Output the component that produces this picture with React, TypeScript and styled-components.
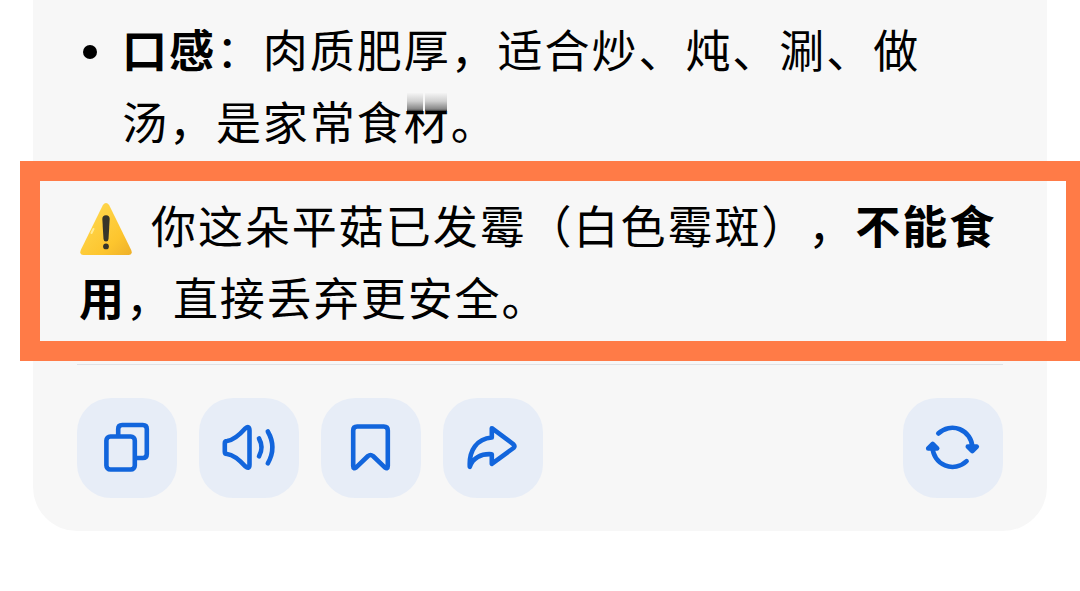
import styled, { createGlobalStyle } from "styled-components";

//styled-components
const GlobalStyle = createGlobalStyle`
    body {
        margin: 0;
        background: #ffffff;
        overflow: hidden;
    }
`;

const Page = styled.main`
    position: relative;
    height: 591px;
    overflow: hidden;
    font-family: "Noto Sans CJK SC", "Noto Sans", sans-serif;
    font-size: 45px;
    line-height: 72px;
    letter-spacing: 1.95px;
    text-spacing-trim: space-all;
    color: #000000;
`;

const Card = styled.article`
    box-sizing: border-box;
    width: 1014px;
    height: 531px;
    margin-left: 33px;
    padding: 13px 44px 0;
    border-radius: 0 0 44px 44px;
    background: #f7f7f7;
`;

const List = styled.ul`
    margin: 0;
    padding: 0;
    list-style: none;
`;

const ListItem = styled.li`
    display: flex;
    white-space: nowrap;
`;

const Bullet = styled.span`
    flex: none;
    width: 14px;
    height: 14px;
    margin: 32px 25px 0 6px;
    border-radius: 50%;
    background: #000000;
`;

const Strong = styled.strong`
    font-weight: 700;
`;

const SmearedText = styled.span`
    position: relative;
`;

const Smear = styled.span`
    position: absolute;
    left: 3px;
    top: 5px;
    display: flex;
    gap: 2px;
`;

const SmearBar = styled.span<{ $width: number }>`
    width: ${({ $width }) => $width}px;
    height: 18px;
    background: linear-gradient(#f4f4f4, #d0d0d0 45%, #858585 90%, #333333);
`;

const Warning = styled.p`
    margin: 32px 0 0 2px;
    white-space: nowrap;
`;

const WarningIcon = styled.svg`
    width: 54px;
    height: 54px;
    margin-right: 18px;
    vertical-align: -12px;
`;

const Divider = styled.hr`
    height: 1px;
    margin: 31px 0 33px;
    border: 0;
    background: #dfe2e5;
`;

const Toolbar = styled.div`
    display: flex;
    gap: 22px;
`;

const ToolButton = styled.button<{ $last?: boolean }>`
    width: 100px;
    height: 100px;
    padding: 0;
    margin-left: ${({ $last }) => ($last ? "auto" : "0")};
    border: 0;
    border-radius: 34px;
    background: #e7edf7;

    svg {
        display: block;
        width: 100px;
        height: 100px;
        fill: none;
        stroke: #1265dc;
        stroke-width: 4.6;
        stroke-linecap: round;
        stroke-linejoin: round;
    }
`;

//Marker frame drawn over the card, runs off the right edge
const Highlight = styled.div`
    position: absolute;
    left: 20px;
    top: 161px;
    box-sizing: border-box;
    width: 1066px;
    height: 200px;
    border: 20px solid #ff7b47;
    pointer-events: none;
`;

//Components
const CopyIcon = () => (
    <svg viewBox="0 0 100 100">
        <rect x="29.4" y="38.5" width="28.4" height="33" rx="4" />
        <path d="M41.2 37V31Q41.2 27 45.2 27H65.8Q69.8 27 69.8 31V56Q69.8 60 65.8 60H60" />
    </svg>
);

const SpeakerIcon = () => (
    <svg viewBox="0 0 100 100">
        <path d="M28 43Q36 42 46.2 30.5Q50.5 27 50.5 32.5V66.5Q50.5 72 46.2 68.3Q36 57 28 56Q25.8 56 25.8 53.8V45.2Q25.8 43 28 43Z" />
        <path d="M60 40.5Q65 49.4 60 58.3M68.8 33.5Q78 49.4 68.8 65.3" />
    </svg>
);

const BookmarkIcon = () => (
    <svg viewBox="0 0 100 100">
        <path d="M36.2 28.5H62.8Q66.8 28.5 66.8 32.5V68Q66.8 71.5 63.8 69.3L52 58Q49.5 56 47 58L35.2 69.3Q32.2 71.5 32.2 68V32.5Q32.2 28.5 36.2 28.5Z" />
    </svg>
);

const ShareIcon = () => (
    <svg viewBox="0 0 100 100">
        <path d="M48.8 30.2L70.5 46.3Q72.5 48.2 70.5 50L48.8 65.8V56.2C38 55.4 29.5 60 26.8 68.8C25.8 52 34 40.8 48.8 39.5Z" />
    </svg>
);

const RefreshIcon = () => (
    <svg viewBox="0 0 100 100">
        <path d="M35.3 35.5A20 20 0 0 1 69.3 49.3M63.6 63.2A20 20 0 0 1 29.6 49.3" />
        <path
            d="M64.8 48.6L69.3 53L73.8 48.6ZM25.2 50.4L29.7 46L34.2 50.4Z"
            fill="#1265dc"
        />
    </svg>
);

const tools = [
    { label: "复制", icon: <CopyIcon /> },
    { label: "朗读", icon: <SpeakerIcon /> },
    { label: "收藏", icon: <BookmarkIcon /> },
    { label: "分享", icon: <ShareIcon /> },
    { label: "重新生成", icon: <RefreshIcon />, last: true },
];

const App = () => {
    return (
        <Page>
            <GlobalStyle />
            <Card>
                <List>
                    <ListItem>
                        <Bullet />
                        <span>
                            <Strong>口感</Strong>：肉质肥厚，适合炒、炖、涮、做
                            <br />
                            汤，是家常食
                            <SmearedText>
                                材
                                <Smear>
                                    <SmearBar $width={16} />
                                    <SmearBar $width={22} />
                                </Smear>
                            </SmearedText>
                            。
                        </span>
                    </ListItem>
                </List>
                <Warning>
                    <WarningIcon viewBox="0 0 54 54">
                        <defs>
                            <linearGradient id="sign" x1="0" y1="0" x2="1" y2="1">
                                <stop offset="0" stopColor="#ffdc55" />
                                <stop offset="0.7" stopColor="#fdc52e" />
                                <stop offset="1" stopColor="#eeb02a" />
                            </linearGradient>
                        </defs>
                        <path
                            d="M23.9 3Q27 -0.8 30.1 3L52.2 48Q54 52.4 49.5 53H4.5Q0 52.4 1.8 48Z"
                            fill="url(#sign)"
                        />
                        <path
                            d="M14.5 27L12.5 31"
                            stroke="#ffeb94"
                            strokeWidth="2"
                            strokeLinecap="round"
                        />
                        <path
                            d="M23.3 17Q23.3 13.2 27 13.2T30.7 17L29.5 37Q29.2 39.5 27 39.5T24.5 37Z"
                            fill="#37352a"
                        />
                        <circle cx="27" cy="44.4" r="2.9" fill="#37352a" />
                    </WarningIcon>
                    你这朵平菇已发霉（白色霉斑），<Strong>不能食</Strong>
                    <br />
                    <Strong>用</Strong>，直接丢弃更安全。
                </Warning>
                <Divider />
                <Toolbar>
                    {tools.map((tool) => (
                        <ToolButton key={tool.label} aria-label={tool.label} $last={tool.last}>
                            {tool.icon}
                        </ToolButton>
                    ))}
                </Toolbar>
            </Card>
            <Highlight />
        </Page>
    );
};

export default App;
